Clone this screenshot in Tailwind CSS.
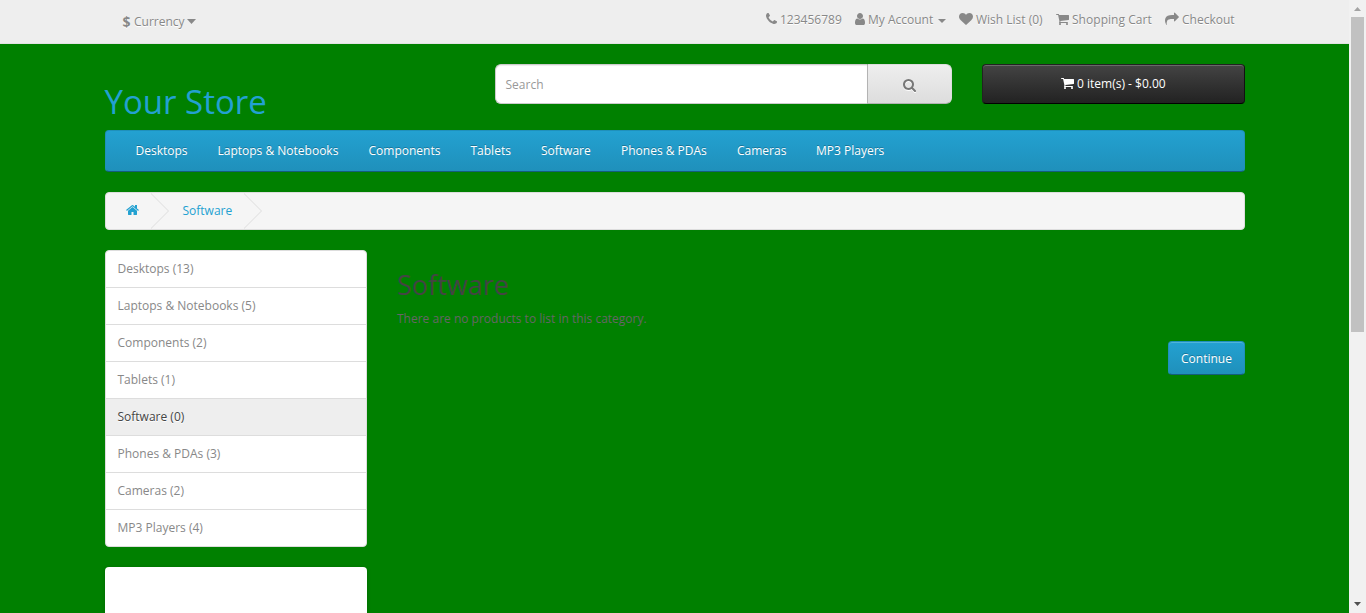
<!DOCTYPE html>
<html lang="en">
<head>
<meta charset="utf-8">
<title>Software</title>
<script src="https://cdn.jsdelivr.net/npm/@tailwindcss/browser@4"></script>
</head>
<body class="h-[613px] overflow-hidden bg-[#008000] font-['Open_Sans',sans-serif] text-[12px] leading-5 text-[#666]">
<svg class="hidden">
  <symbol id="cart" viewBox="64 0 1664 1792"><path d="M704 1536q0 52-38 90t-90 38-90-38-38-90 38-90 90-38 90 38 38 90zm896 0q0 52-38 90t-90 38-90-38-38-90 38-90 90-38 90 38 38 90zm128-1088v512q0 24-16.5 42.5t-40.5 21.5l-1044 122q13 60 13 70 0 16-24 64h920q26 0 45 19t19 45-19 45-45 19h-1024q-26 0-45-19t-19-45q0-11 8-31.5t16-36 21.5-40 15.5-29.5l-177-823h-204q-26 0-45-19t-19-45 19-45 45-19h256q16 0 28.5 6.5t19.5 15.5 13 24.5 8 26 5.5 29.5 4.5 26h1201q26 0 45 19t19 45z"/></symbol>
</svg>
<div class="flex h-full">
  <div class="flex h-full w-[1349px] flex-col overflow-hidden">
    <nav class="h-11 shrink-0 border-b border-[#e2e2e2] bg-[#eee] text-[#888] [text-shadow:0_1px_0_#fff]">
      <div class="mr-[104px] ml-[105px] flex h-full justify-between">
        <div class="flex items-start pt-3 pl-[17.500px]">
          <strong class="w-[11.500px] text-[14px] leading-[19px]">$</strong><span class="w-[53px]">Currency</span>
          <svg class="mt-[7px] h-[5px] w-[9px] fill-current" viewBox="0 0 9 5"><path d="M0 0h9L4.500 5z"/></svg>
        </div>
        <ul class="flex pt-[10px] whitespace-nowrap">
          <li class="flex w-[89px]"><svg class="mt-[2px] mr-[3px] h-[14px] w-[11px] fill-current" viewBox="192 0 1408 1792"><path d="M1600 1240q0 27-10 70.500t-21 68.500q-21 50-122 106-94 51-186 51-27 0-53-3.500t-57.500-12.500-47-14.500-55.500-20.500-49-18q-98-35-175-83-127-79-264-216t-216-264q-48-77-83-175-3-9-18-49t-20.500-55.500-14.500-47-12.500-57.500-3.500-53q0-92 51-186 56-101 106-122 25-11 68.500-21t70.500-10q14 0 21 3 18 6 53 76 11 19 30 54t35 63.500 31 53.500q3 4 17.500 25t21.500 35.500 7 28.500q0 20-28.500 50t-62 55-62 53-28.500 46q0 9 5 22.500t8.500 20.500 14 24 11.500 19q76 137 174 235t235 174q2 1 19 11.500t24 14 20.500 8.500 22.500 5q18 0 46-28.500t53-62 55-62 50-28.500q14 0 28.500 7t35.500 21.500 25 17.500q25 15 53.500 31t63.500 35 54 30q70 35 76 53 3 7 3 21z"/></svg><span>123456789</span></li>
          <li class="flex w-[104px]"><svg class="mt-[2px] mr-[3px] h-[14px] w-[10px] fill-current" viewBox="256 0 1280 1792"><path d="M1536 1399q0 109-62.500 187t-150.500 78h-854q-88 0-150.500-78t-62.500-187q0-85 8.500-160.500t31.500-152 58.500-131 94-89 134.500-34.500q131 128 313 128t313-128q76 0 134.500 34.500t94 89 58.500 131 31.500 152 8.500 160.500zm-256-887q0 159-112.500 271.500t-271.500 112.500-271.500-112.500-112.500-271.500 112.500-271.500 271.500-112.500 271.500 112.500 112.500 271.500z"/></svg><span class="w-[70px]">My Account</span><svg class="mt-[9px] h-1 w-2 fill-current" viewBox="0 0 8 4"><path d="M0 0h8L4 4z"/></svg></li>
          <li class="flex w-[97px]"><svg class="mt-[2px] mr-[3px] h-[14px] w-[14px] fill-current" viewBox="0 0 1792 1792"><path d="M896 1664q-26 0-44-18l-624-602q-10-8-27.500-26t-55.500-65.500-68-97.500-53.500-121-23.500-138q0-220 127-344t351-124q62 0 126.500 21.500t120 58 95.500 68.500 76 68q36-36 76-68t95.500-68.500 120-58 126.500-21.500q224 0 351 124t127 344q0 221-229 450l-623 600q-18 18-44 18z"/></svg><span>Wish List (0)</span></li>
          <li class="flex w-[109px]"><svg class="mt-[2px] mr-[3px] h-[14px] w-[13px] fill-current"><use href="#cart"/></svg><span class="tracking-[0.04px]">Shopping Cart</span></li>
          <li class="flex w-[80px]"><svg class="mt-[2px] mr-[3px] h-[14px] w-[14px] fill-current" viewBox="0 0 1792 1792"><path d="M1792 640q0 26-19 45l-512 512q-19 19-45 19t-45-19-19-45v-256h-224q-98 0-175.500 6t-154 21.500-133 42.500-105.500 69.500-80 101-48.500 138.500-17.500 181q0 55 5 123 0 6 2.500 23.500t2.500 26.500q0 15-8.500 25t-23.500 10q-16 0-28-17-7-9-13-22t-13.500-30-10.500-24q-127-285-127-451 0-199 53-333 162-403 875-403h224v-256q0-26 19-45t45-19 45 19l512 512q19 19 19 45z"/></svg><span>Checkout</span></li>
        </ul>
      </div>
    </nav>
    <div class="ml-[105px] w-[1140px]">
      <header class="flex h-[86px] items-start pt-5">
        <h1 class="w-[390px] pt-[19px] text-[33px] leading-[38px] text-[#23a1d1]"><span class="-ml-[0.500px]">Your Store</span></h1>
        <div class="mr-[30px] flex h-10 w-[457px]">
          <div class="w-[372px] rounded-l-[6px] border border-r-0 border-[#ccc] bg-white pt-[10px] pl-[9.500px] leading-[19px] text-[#999] shadow-[inset_0_1px_1px_rgba(0,0,0,0.075)]">Search</div>
          <button class="flex w-[85px] items-center justify-center rounded-r-[6px] border border-t-[#ddd] border-r-[#ddd] border-b-[#b3b3b3] border-l-[#b3b3b3] bg-linear-to-b from-[#eee] to-[#ddd] text-[#777]"><svg class="mt-[2px] h-[14px] w-[13px] fill-current drop-shadow-[0_1px_0_#fff]" viewBox="64 0 1664 1792"><path d="M1216 832q0-185-131.500-316.500t-316.500-131.500-316.500 131.500-131.500 316.500 131.500 316.500 316.500 131.500 316.500-131.500 131.500-316.500zm512 832q0 52-38 90t-90 38q-54 0-90-38l-343-342q-179 124-399 124-143 0-273.500-55.500t-225-150-150-225-55.500-273.500 55.500-273.500 150-225 225-150 273.500-55.500 273.500 55.500 225 150 150 225 55.500 273.500q0 220-124 399l343 343q37 37 37 90z"/></svg></button>
        </div>
        <button class="flex h-10 w-[263px] rounded-[4px] border border-t-[#222] border-r-[#111] border-b-black border-l-[#222] bg-linear-to-b from-[#444] to-[#222] pt-[9px] pl-[78px] text-white shadow-[inset_0_1px_0_rgba(255,255,255,0.2)]"><svg class="mt-[2px] mr-[3px] h-[14px] w-[13px] fill-current"><use href="#cart"/></svg><span class="whitespace-nowrap">0 item(s) - $0.00</span></button>
      </header>
      <nav class="flex h-[42px] rounded-[4px] border border-t-[#1f90bb] border-r-[#1f90bb] border-b-[#145e7a] border-l-[#1f90bb] bg-linear-to-b from-[#23a1d1] to-[#1f90bb] pt-[10px] pl-[29.500px] whitespace-nowrap text-white [text-shadow:0_-1px_0_rgba(0,0,0,0.25)]">
        <span class="w-[82px]">Desktops</span><span class="w-[151px]">Laptops &amp; Notebooks</span><span class="w-[102px]">Components</span><span class="w-[70.500px]">Tablets</span><span class="w-[80px]">Software</span><span class="w-[116px]">Phones &amp; PDAs</span><span class="w-[79px]">Cameras</span><span>MP3 Players</span>
      </nav>
      <div class="mt-5 flex h-[38px] overflow-hidden rounded-[4px] border border-[#ddd] bg-[#f5f5f5] text-[#23a1d1]">
        <div class="w-[45px] pt-[10px] pl-5"><svg class="h-[14px] w-[13px] fill-current" viewBox="64 0 1664 1792"><path d="M1472 992v480q0 26-19 45t-45 19h-384v-384h-256v384h-384q-26 0-45-19t-19-45v-480q0-1 .5-3t.5-3l575-474 575 474q1 2 1 6zm223-69l-62 74q-8 9-21 11h-3q-13 0-21-7l-692-577-692 577q-12 8-24 7-13-2-21-11l-62-74q-8-10-7-23.500t11-21.500l719-599q32-26 76-26t76 26l244 204v-195q0-14 9-23t23-9h192q14 0 23 9t9 23v408l219 182q10 8 11 21.500t-7 23.500z"/></svg></div>
        <svg class="h-9 w-[19px] fill-none stroke-[#ddd]" viewBox="0 0 19 36"><path d="M-.5 0l18 18-18 18"/></svg>
        <span class="w-[74px] pt-2 pl-[12.500px]">Software</span>
        <svg class="h-9 w-[19px] fill-none stroke-[#ddd]" viewBox="0 0 19 36"><path d="M-.5 0l18 18-18 18"/></svg>
      </div>
      <main class="mt-5 flex gap-[30px]">
        <aside class="w-[262px]">
          <ul class="divide-y divide-[#ddd] overflow-hidden rounded-[4px] border border-[#ddd] bg-white text-[#888] *:h-[37px] *:pt-2 *:pl-[11.500px] *:last:h-9">
            <li>Desktops (13)</li>
            <li>Laptops &amp; Notebooks (5)</li>
            <li>Components (2)</li>
            <li>Tablets (1)</li>
            <li class="bg-[#eee] text-[#444] [text-shadow:0_1px_0_#fff]">Software (0)</li>
            <li>Phones &amp; PDAs (3)</li>
            <li>Cameras (2)</li>
            <li>MP3 Players (4)</li>
          </ul>
          <div class="mt-5 h-[182px] rounded-[4px] bg-white shadow-[0_1px_4px_rgba(0,0,0,0.2)]"></div>
        </aside>
        <section class="flex w-[848px] flex-col items-start">
          <h2 class="mt-5 text-[27px] leading-[30px] text-[#444]">Software</h2>
          <p class="mt-[9px]">There are no products to list in this category.</p>
          <button class="mt-3 h-[34px] w-[77px] self-end rounded-[4px] border border-t-[#1f90bb] border-r-[#1f90bb] border-b-[#145e7a] border-l-[#1f90bb] bg-linear-to-b from-[#23a1d1] to-[#1f90bb] pt-px text-white shadow-[inset_0_1px_0_rgba(255,255,255,0.2)] [text-shadow:0_-1px_0_rgba(0,0,0,0.25)]">Continue</button>
        </section>
      </main>
    </div>
  </div>
  <div class="flex w-[17px] flex-col items-center bg-[#f1f1f1]">
    <svg class="h-[17px] w-[17px] shrink-0 fill-[#a3a3a3]" viewBox="0 0 17 17"><path d="M5 11h7L8.500 7z"/></svg>
    <div class="h-[315px] w-[13px] bg-[#c1c1c1]"></div>
    <svg class="mt-auto h-[17px] w-[17px] shrink-0 fill-[#505050]" viewBox="0 0 17 17"><path d="M5 6h7L8.500 10z"/></svg>
  </div>
</div>
</body>
</html>
